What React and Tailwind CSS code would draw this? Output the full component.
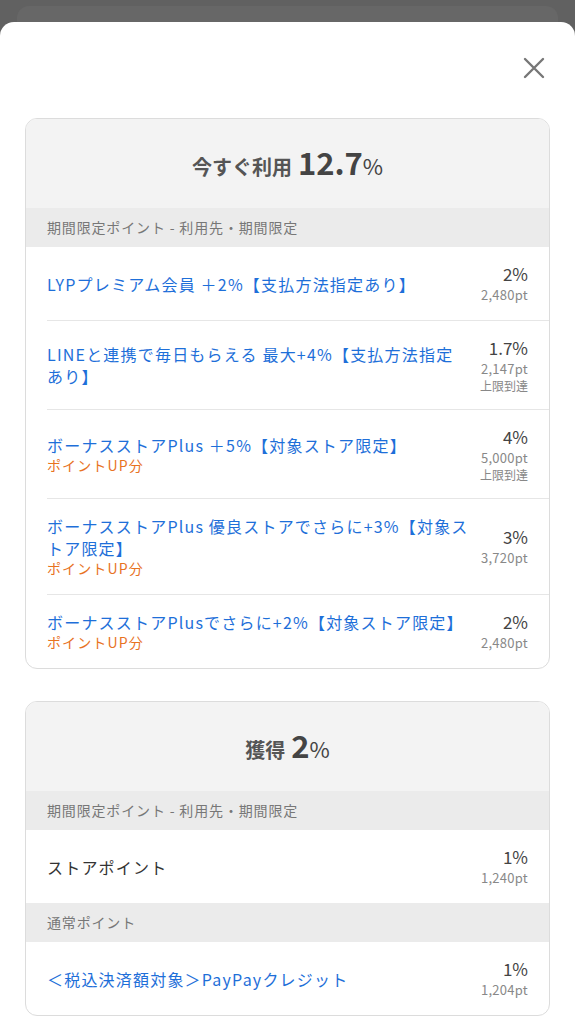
import React from "react";

const font = { fontFamily: '"Noto Sans CJK JP", "Noto Sans", sans-serif' };

function Row({ title, titleBlue = true, sub, pct, pt, limit, last }) {
  return (
    <div className={`ml-[21px] flex items-center justify-between pr-[21px] py-[16px] ${last ? "" : "border-b border-[#e6e6e6]"}`}>
      <div className="flex-1 pr-3">
        <div className={`text-[16px] leading-[22px] tracking-[0.075em] ${titleBlue ? "text-[#1e6fd9]" : "text-[#333]"}`}>{title}</div>
        {sub && <div className="text-[14px] leading-[19px] tracking-[0.08em] text-[#e8731f]">{sub}</div>}
      </div>
      <div className="flex shrink-0 flex-col items-end">
        <div className="text-[17px] leading-[22px] text-[#444]">{pct}</div>
        <div className="text-[13px] leading-[19px] tracking-[0.02em] text-[#888]">{pt}</div>
        {limit && <div className="text-[12px] leading-[15px] text-[#888]">上限到達</div>}
      </div>
    </div>
  );
}

function Section({ label }) {
  return (
    <div className="flex h-[39px] items-center bg-[#ebebeb] pl-[21px] text-[14px] tracking-[0.06em] text-[#777]">{label}</div>
  );
}

function Card({ label, num, children }) {
  return (
    <div className="overflow-hidden rounded-[12px] border border-[#dcdcdc] bg-white">
      <div className="flex h-[89px] items-center justify-center bg-[#f3f3f3]">
        <div className="flex items-baseline">
          <span className="mr-[6px] text-[20px] font-bold text-[#555]">{label}</span>
          <span className="text-[31px] font-bold leading-none text-[#444]">{num}</span>
          <span className="text-[22px] leading-none text-[#444]">%</span>
        </div>
      </div>
      {children}
    </div>
  );
}

export default function App() {
  return (
    <div className="min-h-[1024px] bg-[#616161]" style={font}>
      <div className="mx-[17px] h-[22px] pt-[6px]">
        <div className="h-full rounded-t-[12px] bg-[#676767]" />
      </div>
      <div className="min-h-[1002px] rounded-t-[14px] bg-white px-[25px]">
        <div className="flex h-[96px] items-center justify-end pr-[5px]">
          <svg width="22" height="22" viewBox="0 0 22 22" className="mb-[5px]">
            <path d="M2 2 L20 20 M20 2 L2 20" stroke="#777" strokeWidth="2.4" strokeLinecap="round" />
          </svg>
        </div>
        <Card label="今すぐ利用" num="12.7">
          <Section label="期間限定ポイント - 利用先・期間限定" />
          <Row title="LYPプレミアム会員 ＋2%【支払方法指定あり】" pct="2%" pt="2,480pt" />
          <Row title="LINEと連携で毎日もらえる 最大+4%【支払方法指定あり】" pct="1.7%" pt="2,147pt" limit />
          <Row title="ボーナスストアPlus ＋5%【対象ストア限定】" sub="ポイントUP分" pct="4%" pt="5,000pt" limit />
          <Row title="ボーナスストアPlus 優良ストアでさらに+3%【対象ストア限定】" sub="ポイントUP分" pct="3%" pt="3,720pt" />
          <Row title="ボーナスストアPlusでさらに+2%【対象ストア限定】" sub="ポイントUP分" pct="2%" pt="2,480pt" last />
        </Card>
        <div className="h-[32px]" />
        <Card label="獲得" num="2">
          <Section label="期間限定ポイント - 利用先・期間限定" />
          <Row title="ストアポイント" titleBlue={false} pct="1%" pt="1,240pt" last />
          <Section label="通常ポイント" />
          <Row title="＜税込決済額対象＞PayPayクレジット" pct="1%" pt="1,204pt" last />
        </Card>
        <div className="h-[20px]" />
      </div>
    </div>
  );
}
